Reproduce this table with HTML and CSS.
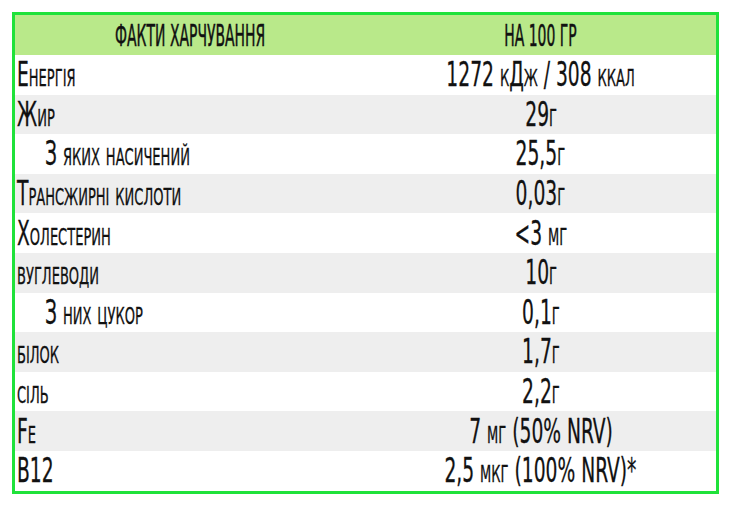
FILE: index.html
```html
<!DOCTYPE html>
<html lang="uk">
<head>
<meta charset="utf-8">
<link rel="stylesheet" href="styles.css">
</head>
<body>
<table class="facts">
  <thead>
    <tr><th><span class="t">Факти харчування</span></th><th><span class="t">на 100 гр</span></th></tr>
  </thead>
  <tbody>
    <tr><td><span class="t">Енергія</span></td><td><span class="t">1272 кДж / 308 ккал</span></td></tr>
    <tr><td><span class="t">Жир</span></td><td><span class="t">29г</span></td></tr>
    <tr><td class="sub"><span class="t">З яких насичений</span></td><td><span class="t">25,5г</span></td></tr>
    <tr><td><span class="t">Трансжирні кислоти</span></td><td><span class="t">0,03г</span></td></tr>
    <tr><td><span class="t">Холестерин</span></td><td><span class="t">&lt;3 мг</span></td></tr>
    <tr><td><span class="t">вуглеводи</span></td><td><span class="t">10г</span></td></tr>
    <tr><td class="sub"><span class="t">З них цукор</span></td><td><span class="t">0,1г</span></td></tr>
    <tr><td><span class="t">білок</span></td><td><span class="t">1,7г</span></td></tr>
    <tr><td><span class="t">сіль</span></td><td><span class="t">2,2г</span></td></tr>
    <tr><td><span class="t">Fe</span></td><td><span class="t">7 мг (50% NRV)</span></td></tr>
    <tr><td><span class="t">B12</span></td><td><span class="t">2,5 мкг (100% NRV)*</span></td></tr>
  </tbody>
</table>
</body>
</html>
```
FILE: styles.css
```css
html, body {
  margin: 0;
  padding: 0;
  background: #ffffff;
}
body {
  padding: 12px 0 0 12px;
  font-family: "DejaVu Sans Condensed", "DejaVu Sans", sans-serif;
  color: #111111;
}
.facts {
  width: 707px;
  border: 3px solid #1fe23a;
  border-collapse: collapse;
  border-spacing: 0;
  table-layout: fixed;
}
.facts th,
.facts td {
  padding: 0 2px;
  height: 39.6px;
  line-height: 1;
  font-size: 33px;
  font-variant: small-caps;
  font-weight: normal;
  vertical-align: middle;
  white-space: nowrap;
  overflow: visible;
}
.facts thead tr {
  background: #b9e98a;
}
.facts thead th {
  height: 40px;
  font-size: 31px;
  text-align: center;
  text-transform: uppercase;
}
.facts td:first-child {
  text-align: left;
}
.facts td:last-child {
  text-align: center;
}
.facts td.sub {
  padding-left: 30px;
}
.facts tbody tr:nth-child(even) {
  background: #eeeeee;
}
.t {
  display: inline-block;
  transform: scaleX(0.63);
  transform-origin: center;
  -webkit-text-stroke: 0.3px #111111;
}
.facts th .t {
  transform: scaleX(0.5);
  -webkit-text-stroke: 0.5px #111111;
}
.facts td:first-child .t {
  transform-origin: left center;
}
```
